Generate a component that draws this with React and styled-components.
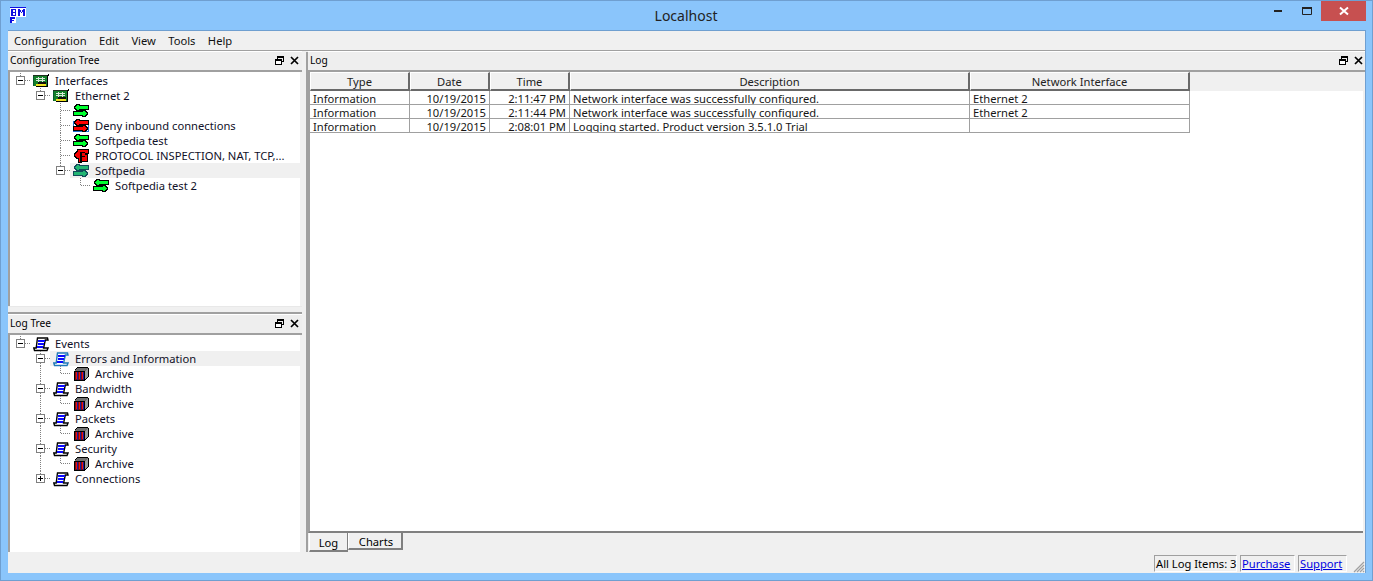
import React from 'react';
import styled, { createGlobalStyle } from 'styled-components';

const Global = createGlobalStyle`
  html, body { margin: 0; padding: 0; height: 100%; overflow: hidden; background: #8ac5fb; }
  #root { height: 100%; }
  * { box-sizing: border-box; }
`;
const FONT = `"Noto Sans", "Open Sans", sans-serif`;

const Window = styled.div`
  width: 1373px; height: 581px; display: flex; flex-direction: column;
  background: #8ac5fb; border: 1px solid #6f9fd0; font: 11.2px/15px ${FONT}; color: #000;
`;
const TitleBar = styled.div`
  height: 29px; display: flex; align-items: flex-start; flex: none; padding-right: 6px;
`;
const AppIcon = styled.svg`
  width: 16px; height: 16px; margin: 6px 0 0 9px; flex: none;
`;
const Title = styled.div`
  flex: 1; text-align: center; font-size: 14px; line-height: 29px; color: #222; padding-left: 83px;
`;
const CaptionBtn = styled.button`
  width: ${p => p.$w}px; height: 20px; border: 0; padding: 0; background: ${p => p.$bg || 'transparent'};
  display: flex; align-items: center; justify-content: center;
`;
const Client = styled.div`
  flex: 1; margin: 0 6px 7px 7px; background: #f0f0f0; display: flex; flex-direction: column; min-height: 0;
  border: 1px solid #6f9fd0; border-bottom: 0; border-left: 0;
`;
const MenuBar = styled.div`
  height: 20px; flex: none; display: flex; align-items: center; padding-left: 6px; gap: 12.4px;
  border-bottom: 1px solid #a0a0a0;
`;
const MenuItem = styled.span`color: #111;`;
const Body = styled.div`flex: 1; display: flex; min-height: 0;`;
const LeftCol = styled.div`
  width: 294px; flex: none; display: flex; flex-direction: column;
`;
const Gutter = styled.div`
  width: 6px; flex: none; border-right: 2px solid #a0a0a0; margin-top: 1px;
`;
const Pane = styled.section`
  display: flex; flex-direction: column; min-height: 0; flex: ${p => p.$grow || 'none'}; height: ${p => p.$h ? p.$h + 'px' : 'auto'};
`;
const PaneHead = styled.header`
  height: 21px; flex: none; display: flex; align-items: center; justify-content: space-between;
  padding: 0 ${p => p.$pr}px 2px 2px; background: #eeeeee; border-top: 1px solid #fff; border-bottom: 2px solid #a0a0a0;
  font-size: 10.2px;
`;
const PaneTools = styled.div`display: flex; align-items: center; gap: 6px; padding-top: 1px;`;
const TreeBox = styled.div`
  flex: 1; background: #fff; padding-top: 1px; border-left: 2px solid #a0a0a0; margin-right: 2px;
  display: flex; flex-direction: column; min-height: 0;
`;
const TreeRow = styled.div`display: flex; height: 15px; flex: none;`;
const dots = 'repeating-linear-gradient(to bottom, #808080 0 1px, transparent 1px 2px)';
const hdots = 'repeating-linear-gradient(to right, #808080 0 1px, transparent 1px 2px)';
const Cell = styled.div`
  width: 20px; height: 15px; flex: none; display: flex; align-items: center; justify-content: center;
  padding-left: 1px;
  background-repeat: no-repeat;
  background-image: ${p => [
    p.$up || p.$down ? dots : null,
    p.$right ? hdots : null,
  ].filter(Boolean).join(',') || 'none'};
  background-size: ${p => [
    p.$up && p.$down ? '1px 15px' : p.$up || p.$down ? '1px 8px' : null,
    p.$right ? '9px 1px' : null,
  ].filter(Boolean).join(',') || 'auto'};
  background-position: ${p => [
    p.$up || p.$down ? `10px ${p.$up ? 0 : 7}px` : null,
    p.$right ? '11px 7px' : null,
  ].filter(Boolean).join(',') || '0 0'};
`;
const Expander = styled.span`
  width: 9px; height: 9px; border: 1px solid #808080; background: #fff; display: flex; align-items: center; justify-content: center;
  position: relative;
  &::before { content: ''; width: 5px; height: 1px; background: #000; }
  ${p => p.$plus ? `&::after { content: ''; position: absolute; left: 3px; top: 1px; width: 1px; height: 5px; background: #000; }` : ''}
`;
const NodeLabel = styled.div`
  flex: 1; display: flex; align-items: center; padding-left: 3px; gap: 6px; min-width: 0; white-space: nowrap;
  background: ${p => p.$sel ? '#f0f0f0' : 'transparent'};
`;
const NodeText = styled.span`color: #101028;`;
const Splitter = styled.div`
  height: 8px; flex: none; border-bottom: 2px solid #a0a0a0; border-top: 1px solid #e8e8e8; background: #f0f0f0;
`;
const LogPane = styled.div`
  flex: 1; display: flex; flex-direction: column; min-width: 0;
`;
const LogBody = styled.div`
  flex: 1; background: #fff; border-left: 2px solid #a0a0a0; border-bottom: 2px solid #808080; margin-right: 2px; min-height: 0;
`;
const HeadStrip = styled.div`
  height: 19px; background: #f0f0f0; display: flex;
`;
const Hd = styled.div`
  width: ${p => p.$w}px; height: 19px; flex: none; text-align: center; line-height: 18px; background: #f0f0f0;
  border-top: 1px solid #fff; border-left: 1px solid #fff; border-right: 2px solid #696969; border-bottom: 2px solid #696969;
  color: #222;
`;
const DataRow = styled.div`display: flex; height: 14px;`;
const Td = styled.div`
  width: ${p => p.$w}px; flex: none; height: 14px; line-height: 15px; padding: 0 3px; white-space: nowrap; overflow: hidden;
  text-align: ${p => p.$right ? 'right' : 'left'}; color: #161616;
  border-right: 1px solid #a0a0a0; border-bottom: 1px solid #a0a0a0;
`;
const Tabs = styled.div`height: 19px; display: flex; align-items: flex-start; flex: none; padding-left: 1px;`;
const Tab = styled.div`
  width: ${p => p.$w}px; text-align: center; background: #f0f0f0;
  height: ${p => p.$active ? 19 : 17}px;
  line-height: ${p => p.$active ? 16 : 17}px;
  ${p => p.$active
    ? `border-left: 1px solid #fff; border-right: 1px solid #808080; border-bottom: 2px solid #808080; padding-top: 2px;`
    : `border-left: 1px solid #fff; border-right: 2px solid #808080; border-bottom: 2px solid #808080; padding-left: 2px;`}
`;
const StatusBar = styled.div`
  height: 21px; flex: none; display: flex; justify-content: flex-end; align-items: flex-start; position: relative;
  padding: 3px 18px 0 0; gap: 3px;
`;
const StatusCell = styled.div`
  height: 17px; line-height: 16px; padding: 0 1px; border: 1px solid; border-color: #a0a0a0 #fff #fff #a0a0a0; white-space: nowrap; width: ${p => p.$w}px;
`;
const StatusLink = styled.a`color: #0000e0; text-decoration: underline;`;
const Grip = styled.svg`position: absolute; right: 0; bottom: 0; width: 13px; height: 13px;`;

const Restore = () => (
  <svg width="9" height="9" viewBox="0 0 9 9" shapeRendering="crispEdges">
    <path d="M2 .5H8.5V5.5H7M2 1.5H8.5M2 .5V3" fill="none" stroke="#000"/>
    <path d="M.5 3.5H6.5V8.5H.5ZM.5 4.5H6.5" fill="#fff" stroke="#000"/>
  </svg>
);
const Close = () => (
  <svg width="9" height="9" viewBox="0 0 9 9">
    <path d="M1 1L8 8M8 1L1 8" stroke="#000" strokeWidth="1.7"/>
  </svg>
);
const Close2 = () => (
  <svg width="10" height="10" viewBox="0 0 10 10"><path d="M1 1.5L9 8.5M9 1.5L1 8.5" stroke="#fff" strokeWidth="2"/></svg>
);
const Px = styled.svg`width: 16px; height: 16px; flex: none; shape-rendering: crispEdges;`;
const ARROW = 'M2 3H3V2H4V1H6V2H15V5H6V6H4V5H3V4H2Z';
const ArrowPair = ({ fill, line }) => (
  <g transform="translate(0 1)">
    <path d="M5 5H12V8H5Z" fill={line}/>
    <path d={ARROW} fill={fill} stroke={line} strokeWidth="2" paintOrder="stroke"/>
    <path d={ARROW} transform="translate(16 6) scale(-1 1)" fill={fill} stroke={line} strokeWidth="2" paintOrder="stroke"/>
  </g>
);
const GreenArrows = ({ sel }) => (
  <Px viewBox="0 0 16 16">
    <ArrowPair fill={sel ? '#22b573' : '#00ff30'} line={sel ? '#124a5a' : '#000'} />
  </Px>
);
const RedArrows = () => (
  <Px viewBox="0 0 16 16">
    <path d="M.5 3.5H15.5V13.5H.5Z" fill="#fff" stroke="#1e6fd0"/>
    <ArrowPair fill="#ff0000" line="#000" />
  </Px>
);
const RedProto = () => (
  <Px viewBox="0 0 16 16">
    <path d="M2 6H3V5H4V4H5V2H15V5H12V7H14V13H9V11H8V14H6V10H4V9H3V8H2V7H2Z" fill="#f40000" stroke="#000" strokeWidth="1.6" paintOrder="stroke"/>
    <path d="M7 4H9V14H7ZM9 4H12V5H9ZM9 8H12V9H9Z" fill="#000"/>
  </Px>
);
const Card = () => (
  <Px viewBox="0 0 16 16">
    <path d="M15 1H16V3H15ZM14 2H15V14H14Z" fill="#000"/>
    <path d="M0 3H14V13H0Z" fill="#14802a"/>
    <path d="M0 2H14V3H0Z" fill="#203020"/>
    <path d="M0 3H1V13H0Z" fill="#0a5a30"/>
    <path d="M3 5H12V6H3ZM3 7H12V8H3ZM5 4H6V9H5ZM9 4H10V9H9Z" fill="#d8e8d8"/>
    <path d="M5 9H13V11H5Z" fill="#101010"/>
    <path d="M3 11H13V13H3Z" fill="#f0e020"/>
    <path d="M3 13H14V14H3Z" fill="#000"/>
  </Px>
);
const Scroll = ({ sel }) => {
  const line = sel ? '#1f78b8' : '#000';
  return (
    <Px viewBox="0 0 16 16">
      <path d="M4.5 2H14.5L15 4H12.3L10.6 12H15L14 14.5H1.5L.8 12H3.2L4.2 4Z" fill="#fff" stroke={line} strokeWidth="1.4" shapeRendering="auto"/>
      <path d="M5 4H12V6H5ZM5 7H11V9H5ZM4 10H10V12H4Z" fill="#0a0aff"/>
    </Px>
  );
};
const Archive = () => (
  <Px viewBox="0 0 16 16">
    <path d="M4 1H15V2H4ZM3 2H4V3H3ZM2 3H3V4H2ZM15 2H16V11H15ZM14 11H15V12H14ZM13 12H14V13H13ZM12 13H13V14H12Z" fill="#000"/>
    <path d="M4 2H15V3H14V4H13V5H2V4H3V3H4Z" fill="#707070"/>
    <path d="M12 5H13V4H14V3H15V11H14V12H13V13H12Z" fill="#9a9a9a"/>
    <path d="M1 5H12V15H1Z" fill="#000"/>
    <path d="M2 6H11V14H2Z" fill="#7a1010"/>
    <path d="M4 6H5V14H4ZM7 6H8V14H7ZM10 6H11V14H10Z" fill="#1818a0"/>
    <path d="M3 6H4V13H3ZM6 6H7V13H6ZM9 6H10V13H9Z" fill="#f01010"/>
  </Px>
);

const Node = ({ cells, icon, text, sel }) => (
  <TreeRow>
    {cells.map((c, i) => (
      <Cell key={i} $up={c.includes('u')} $down={c.includes('d')} $right={c.includes('r')}>
        {c.includes('-') && <Expander />}
        {c.includes('+') && <Expander $plus />}
      </Cell>
    ))}
    <NodeLabel $sel={sel}>
      {icon}
      <NodeText>{text}</NodeText>
    </NodeLabel>
  </TreeRow>
);

const cols = [100, 80, 80, 400, 220];
const rows = [
  ['Information', '10/19/2015', '2:11:47 PM', 'Network interface was successfully configured.', 'Ethernet 2'],
  ['Information', '10/19/2015', '2:11:44 PM', 'Network interface was successfully configured.', 'Ethernet 2'],
  ['Information', '10/19/2015', '2:08:01 PM', 'Logging started. Product version 3.5.1.0 Trial', ''],
];
const heads = ['Type', 'Date', 'Time', 'Description', 'Network Interface'];
const PaneHeader = ({ title, pr = 3 }) => (
  <PaneHead $pr={pr}>
    <span>{title}</span>
    <PaneTools><Restore /><Close /></PaneTools>
  </PaneHead>
);

export default function App() {
  return (
    <>
      <Global />
      <Window>
        <TitleBar>
          <AppIcon viewBox="0 0 16 16" shapeRendering="crispEdges">
            <path d="M0 0H16V10H6V16H0Z" fill="#fff"/>
            <path d="M0 0H16V1H0ZM1 2H6V3H1ZM1 5H6V6H1ZM1 8H6V9H1ZM1 2H3V9H1ZM5 2H6V5H5ZM5 6H6V8H5ZM8 2H10V9H8ZM13 2H15V9H13ZM10 3H11V5H10ZM12 3H13V5H12ZM11 5H12V6H11ZM0 10H5V12H0ZM0 10H2V16H0ZM2 13H4V14H2Z" fill="#1010e0"/>
          </AppIcon>
          <Title>Localhost</Title>
          <CaptionBtn $w={29}><svg width="8" height="2"><rect width="8" height="2" fill="#222"/></svg></CaptionBtn>
          <CaptionBtn $w={29}><svg width="10" height="8"><path d="M.5.5H9.5V7.5H.5Z" fill="none" stroke="#222"/><rect width="10" height="2" fill="#222"/></svg></CaptionBtn>
          <CaptionBtn $w={45} $bg="#c75050"><Close2 /></CaptionBtn>
        </TitleBar>
        <Client>
          <MenuBar>
            {['Configuration', 'Edit', 'View', 'Tools', 'Help'].map(m => <MenuItem key={m}>{m}</MenuItem>)}
          </MenuBar>
          <Body>
            <LeftCol>
              <Pane $h={255}>
                <PaneHeader title="Configuration Tree" />
                <TreeBox>
                  <Node cells={['u-r']} icon={<Card />} text="Interfaces" />
                  <Node cells={['', 'u-r']} icon={<Card />} text="Ethernet 2" />
                  <Node cells={['', '', 'udr']} icon={<GreenArrows />} text="" />
                  <Node cells={['', '', 'udr']} icon={<RedArrows />} text="Deny inbound connections" />
                  <Node cells={['', '', 'udr']} icon={<GreenArrows />} text="Softpedia test" />
                  <Node cells={['', '', 'udr']} icon={<RedProto />} text="PROTOCOL INSPECTION, NAT, TCP,..." />
                  <Node cells={['', '', 'u-r']} icon={<GreenArrows sel />} text="Softpedia" sel />
                  <Node cells={['', '', '', 'ur']} icon={<GreenArrows />} text="Softpedia test 2" />
                </TreeBox>
              </Pane>
              <Splitter />
              <Pane $grow="1">
                <PaneHeader title="Log Tree" />
                <TreeBox>
                  <Node cells={['u-r']} icon={<Scroll />} text="Events" />
                  <Node cells={['', 'ud-r']} icon={<Scroll sel />} text="Errors and Information" sel />
                  <Node cells={['', 'ud', 'ur']} icon={<Archive />} text="Archive" />
                  <Node cells={['', 'ud-r']} icon={<Scroll />} text="Bandwidth" />
                  <Node cells={['', 'ud', 'ur']} icon={<Archive />} text="Archive" />
                  <Node cells={['', 'ud-r']} icon={<Scroll />} text="Packets" />
                  <Node cells={['', 'ud', 'ur']} icon={<Archive />} text="Archive" />
                  <Node cells={['', 'ud-r']} icon={<Scroll />} text="Security" />
                  <Node cells={['', 'ud', 'ur']} icon={<Archive />} text="Archive" />
                  <Node cells={['', 'u+r']} icon={<Scroll />} text="Connections" />
                </TreeBox>
              </Pane>
            </LeftCol>
            <Gutter />
            <LogPane>
              <PaneHeader title="Log" pr={2} />
              <LogBody>
                <HeadStrip>{heads.map((h, i) => <Hd key={h} $w={cols[i]}>{h}</Hd>)}</HeadStrip>
                {rows.map((r, ri) => (
                  <DataRow key={ri}>
                    {r.map((c, i) => <Td key={i} $w={cols[i]} $right={i === 1 || i === 2}>{c}</Td>)}
                  </DataRow>
                ))}
              </LogBody>
              <Tabs>
                <Tab $w={39} $active>Log</Tab>
                <Tab $w={55}>Charts</Tab>
              </Tabs>
            </LogPane>
          </Body>
          <StatusBar>
            <StatusCell $w={83}>All Log Items: 3</StatusCell>
            <StatusCell $w={55}><StatusLink>Purchase</StatusLink></StatusCell>
            <StatusCell $w={49}><StatusLink>Support</StatusLink></StatusCell>
            <Grip viewBox="0 0 13 13"><path d="M12 2L2 12M12 5L5 12M12 8L8 12M12 11L11 12" stroke="#a0a0a0" strokeWidth="1.2"/></Grip>
          </StatusBar>
        </Client>
      </Window>
    </>
  );
}
